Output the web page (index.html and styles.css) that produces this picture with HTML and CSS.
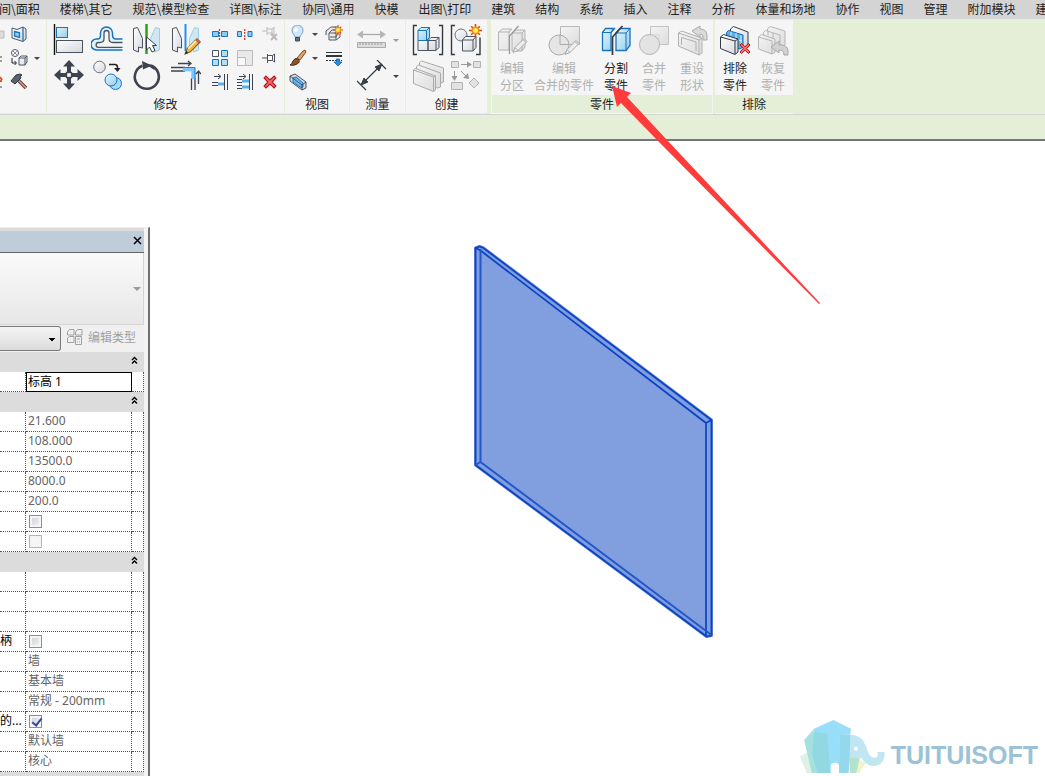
FILE: index.html
```
<!DOCTYPE html>
<html lang="zh-CN">
<head>
<meta charset="utf-8">
<title>零件</title>
<link rel="stylesheet" href="styles.css">
</head>
<body>
<svg class="defs" aria-hidden="true">
  <defs>
    <linearGradient id="blue" x1="0" y1="0" x2="1" y2="1"><stop offset="0" stop-color="#e6f5fc"/><stop offset="1" stop-color="#92cdec"/></linearGradient>
    <linearGradient id="gray" x1="0" y1="0" x2="1" y2="1"><stop offset="0" stop-color="#ffffff"/><stop offset="1" stop-color="#d3d7dd"/></linearGradient>
    <linearGradient id="dim" x1="0" y1="0" x2="1" y2="1"><stop offset="0" stop-color="#f4f4f4"/><stop offset="1" stop-color="#dddddd"/></linearGradient>
    <symbol id="pencil" viewBox="0 0 16 16"><path d="M1 15l2-5L12 1l3 3-9 9z" fill="#f5b63c" stroke="#8a5a18"/><path d="M4 10L12.500 1.500" stroke="#fff0b0" stroke-width="1.500"/><path d="M11 2l3 3 1.500-1.500-3-3z" fill="#d66b5b" stroke="#8a3b2c" stroke-width=".6"/><path d="M1 15l1-3 2 2z" fill="#222"/></symbol>
    <symbol id="pencil-dim" viewBox="0 0 16 16"><path d="M1 15l2-5L12 1l3 3-9 9z" fill="#eee" stroke="#aaa"/><path d="M3 10l3 3M11 2l3 3" stroke="#aaa"/></symbol>
    <symbol id="cross" viewBox="0 0 12 12"><path d="M2.500 1L6 4.200 9.500 1 11 2.500 7.800 6 11 9.500 9.500 11 6 7.800 2.500 11 1 9.500 4.200 6 1 2.500z" fill="#f4696b" stroke="#b3161d"/></symbol>
    <symbol id="spark" viewBox="0 0 12 12"><path d="M6 0v12M0 6h12M2 2l8 8M10 2l-8 8" stroke="#d9420f" stroke-width="1.400"/><circle cx="6" cy="6" r="3" fill="#fff04a" stroke="#ef8a1c" stroke-width="1.300"/></symbol>
  </defs>
</svg>
<div class="app">
  <nav class="tabs">
    <button>间\面积</button><button>楼梯\其它</button><button>规范\模型检查</button><button>详图\标注</button><button>协同\通用</button><button>快模</button><button>出图\打印</button><button>建筑</button><button>结构</button><button>系统</button><button>插入</button><button>注释</button><button>分析</button><button>体量和场地</button><button>协作</button><button>视图</button><button>管理</button><button>附加模块</button><button>建</button>
  </nav>

  <header class="ribbon">
    <section class="panel panel-edge">
      <div class="edge-tools">
        <button aria-label="剪切"><svg width="6" height="18"><path d="M0 6h4v7H0" fill="#ddd" stroke="#bbb"/></svg></button>
        <button aria-label="几何图形"><svg width="18" height="18"><path d="M2 3l5 1.500L13 2l3 2v10l-3 2.500L2 13z" fill="url(#gray)" stroke="#505762"/><path d="M13 2v14M4.500 6.500l5 1.300v4.500l-5-1.300z" fill="#8ecdf2" stroke="#1b75bb" stroke-width="1.300"/></svg></button>
        <span></span>
        <button aria-label="连接"><svg width="6" height="18"><path d="M0 8h2M0 12h2" stroke="#444"/></svg></button>
        <button aria-label="连接几何图形"><svg width="18" height="18"><circle cx="5" cy="4" r="3.500" fill="#fff" stroke="#505762"/><path d="M2.500 1.500l5 5M7.500 1.500l-5 5" stroke="#8a929c"/><path d="M2 9v5h4M4.500 12l2 2-2 2" fill="none" stroke="#222"/><path d="M9 9l2-2h6v6l-2 3H9zM9 9h6l2-2M15 9v7" fill="url(#gray)" stroke="#505762"/></svg></button>
        <button class="drop" aria-label="更多"></button>
        <button aria-label="拆分面"><svg width="6" height="18"><path d="M0 4l2 3M0 8h2" stroke="#d45b20" stroke-width="2"/><path d="M0 14h2" stroke="#444"/></svg></button>
        <button aria-label="拆除"><svg width="18" height="18"><path d="M8 7l8 8" stroke="#6d3d37" stroke-width="3.500"/><path d="M8 7l8 8" stroke="#d4a099" stroke-width="1.500"/><path d="M1 8L6 2l4-1 2 1-2 1 1 2-6 6z" fill="#59636e" stroke="#30363e"/></svg></button>
        <span></span>
      </div>
    </section>

    <section class="panel">
      <div class="panel-body modify">
        <div class="large-grid">
          <button aria-label="对齐"><svg width="32" height="32"><path d="M2.500 0v31" stroke="#111" stroke-width="1.400"/><rect x="4.500" y="3.500" width="11" height="10" fill="url(#blue)" stroke="#1873bd"/><rect x="4.500" y="16.500" width="26" height="12" fill="url(#gray)" stroke="#4c535e"/></svg></button>
          <button aria-label="偏移"><svg width="32" height="32" fill="none"><path d="M31.500 15H25q-3.500 0-3.500-4V9a6 6 0 0 0-12 0v2q0 4-3 4h-1a5.500 5.500 0 0 0 0 11h26" fill="#e3f3fb" stroke="#1873bd" stroke-width="1.500"/><path d="M31.500 18.500H22q-4 0-4-4V9a2.500 2.500 0 0 0-5 0v5.500q0 4-4 4H7.500a2.400 2.400 0 0 0 0 4.800h24" fill="#f5f5f5" stroke="#4c535e" stroke-width="1.300"/></svg></button>
          <button aria-label="镜像 - 拾取轴"><svg width="32" height="32"><path d="M3.500 4.500l4-1 5 11v9.500l-4-1v5l-5-2z" fill="url(#gray)" stroke="#4c535e"/><path d="M29.500 4.500l-4-1-5 11v9.500l4-1v5l5-2z" fill="#cfe8f4" stroke="#9bcde7"/><path d="M16.500 0v30" stroke="#2fa214" stroke-width="2.500"/><path d="M16.500 13v13l3-3 2.500 5 3-1.500-2.500-5h4z" fill="#fff" stroke="#39404a"/></svg></button>
          <button aria-label="镜像 - 绘制轴"><svg width="32" height="32"><path d="M3.500 4.500l4-1 5 11v9.500l-4-1v5l-5-2z" fill="url(#gray)" stroke="#4c535e"/><path d="M29.500 4.500l-4-1-5 11v9.500l4-1v5l5-2z" fill="#cfe8f4" stroke="#9bcde7"/><path d="M16.500 0v27" stroke="#2390ea" stroke-width="2"/><use href="#pencil" x="15" y="14" width="17" height="17"/></svg></button>
          <button aria-label="移动"><svg width="32" height="32"><path d="M17 0l6 6.500h-4V12h-4V6.500h-4zM17 30l6-6.500h-4V18h-4v5.500h-4zM2 15l6.500-6v4H14v4H8.500v4zM32 15l-6.500-6v4H20v4h5.500v4z" fill="#3d444f"/><rect x="14.500" y="12.500" width="5" height="5" fill="#fff" stroke="#3d444f" stroke-width="1.400"/></svg></button>
          <button aria-label="复制"><svg width="32" height="32"><circle cx="8.500" cy="7" r="5.800" fill="url(#gray)" stroke="#6b727b"/><path d="M18 4.500h6q2.500 0 2.500 3v2" fill="none" stroke="#222" stroke-width="1.500"/><path d="M23 8h6.500l-3 4z" fill="#222"/><circle cx="24.500" cy="23.500" r="6" fill="#a8daf2" stroke="#1873bd"/><circle cx="20" cy="20" r="6" fill="url(#blue)" stroke="#1873bd"/></svg></button>
          <button aria-label="旋转"><svg width="32" height="32"><path d="M20 5.200a12 12 0 1 1-8.500.8" fill="none" stroke="#3d444f" stroke-width="2.600" transform="rotate(4 16.500 17)"/><path d="M12 1l10 4.500-9 4z" fill="#3d444f"/><path d="M19 5l6 4" stroke="#3d444f" stroke-width="2.500"/></svg></button>
          <button aria-label="修剪/延伸为角"><svg width="32" height="32" fill="none"><path d="M2 7.500h14M2 11h14M22.500 18v12M26 18v12" stroke="#3d444f" stroke-width="1.300"/><path d="M14 9.300h10.300V19" stroke="#7fc4fb" stroke-width="4"/><path d="M14 7.500h12V19" stroke="#1c7fd7"/><path d="M9 3.500h13M19 1l3 2.500-3 2.500M29.500 24V11M27 14l2.500-3 2.500 3" stroke="#3d444f" stroke-width="1.300"/></svg></button>
        </div>
        <div class="small-grid">
          <button aria-label="拆分图元"><svg width="18" height="18"><path d="M1.500 6.500h6v5h-6zM10.500 6.500h6v5h-6z" fill="#8fcdf0" stroke="#1873bd"/><path d="M8.500 4v11" stroke="#d43a30" stroke-width="1.300" stroke-dasharray="2 1"/></svg></button>
          <button aria-label="用间隙拆分"><svg width="18" height="18"><path d="M1.500 6.500h4v5h-4zM12 6.500h4v5h-4z" fill="#8fcdf0" stroke="#1873bd"/><path d="M8.700 4v11" stroke="#d43a30" stroke-width="1.300" stroke-dasharray="2 1"/></svg></button>
          <button aria-label="解锁"><svg width="18" height="18" fill="none" stroke="#bbb"><path d="M1 6h5M6 2v8M6 4h5v4H6M11 4l2-2v8l-2-2"/><path d="M10 9l6 6M16 9l-6 6" stroke-width="2"/></svg></button>
          <button aria-label="阵列"><svg width="18" height="18" fill="#b4ddf4" stroke="#1873bd"><path d="M10.500 1.500h6v6h-6zM1.500 10.500h6v6h-6zM10.500 10.500h6v6h-6z"/><path d="M1.500 1.500h6v6h-6z" fill="#fff" stroke="#4c535e"/></svg></button>
          <button aria-label="缩放"><svg width="18" height="18" fill="#e9e9e9" stroke="#bbb"><path d="M1.500 1.500h15v15h-15z"/><path d="M1.500 8.500h8v8h-8z" fill="#f8f8f8"/></svg></button>
          <button aria-label="锁定"><svg width="18" height="18" fill="#fff" stroke="#4c535e"><path d="M1 9h5M6.500 5v9M6.500 6.500h5v5h-5M11.500 6.500l2-1.500v8l-2-1.500"/></svg></button>
          <button aria-label="修剪/延伸单个图元"><svg width="18" height="18" fill="none" stroke="#3d444f"><path d="M1 9.500h6M1 12.500h6M3 3.500h6M7 1l3 2.500L7 6M13.500 1v16M16.500 1v16"/><path d="M7 11h6" stroke="#58aff3" stroke-width="3"/></svg></button>
          <button aria-label="修剪/延伸多个图元"><svg width="18" height="18" fill="none" stroke="#3d444f"><path d="M1 6.500h5M1 9.500h5M1 12.500h5M1 15.500h5M3 3.500h6M7 1l3 2.500L7 6M13.500 1v16M16.500 1v16"/><path d="M6 8h7M6 14h7" stroke="#58aff3" stroke-width="3"/></svg></button>
          <button aria-label="删除"><svg width="18" height="18"><use href="#cross" x="2" y="2" width="14" height="14"/></svg></button>
        </div>
      </div>
      <h2>修改</h2>
    </section>

    <section class="panel">
      <div class="panel-body view-tools">
        <button aria-label="隐藏"><svg width="18" height="18"><path d="M6 12c0-2-3-3-3-6.500a5.500 5.500 0 0 1 11 0C14 9 11 10 11 12z" fill="#cfe8fb" stroke="#6f9fc9"/><circle cx="7" cy="5" r="2" fill="#fff"/><path d="M6.500 12.500h4v3.500h-4z" fill="#69717d" stroke="#3f4650"/></svg></button>
        <button class="drop" aria-label="隐藏选项"></button>
        <button aria-label="置换图元"><svg width="18" height="18"><path d="M1 10V6l5-4h7v6l-2 4H5M4 8h7v7H4zM4 8l3-3h7M11 15l4-3V5" fill="#e8eaec" stroke="#555c66"/><use href="#spark" x="8" y="0" width="10" height="10"/></svg></button>
        <button aria-label="替换"><svg width="18" height="18"><path d="M8 9l6-7 2-1 1 2-6 8z" fill="#e9a15b" stroke="#7a4a2b"/><path d="M1 16q2-1 3-4 2-4 5-2 3 3-1 5-3 2-7 1z" fill="#8f5527" stroke="#4d2b14"/></svg></button>
        <button class="drop" aria-label="替换选项"></button>
        <button aria-label="线处理"><svg width="18" height="18"><path d="M1 3.500h16" stroke="#30363e"/><path d="M1 7h16" stroke="#30363e" stroke-width="2"/><path d="M1 11.500h16" stroke="#30363e" stroke-dasharray="2 1"/><path d="M11.500 10h3v3h2.500l-4 4-4-4h2.500z" fill="#2192e9" stroke="#12589b" stroke-width=".7"/></svg></button>
        <button aria-label="选择框"><svg width="18" height="18"><path d="M1 3l5-2 11 8v6l-4 2L1 8z" fill="#d6dce1" stroke="#49515c"/><path d="M4 5l3-1 7 6v4l-2 .5L4 9z" fill="#6cb9ee" stroke="#1873bd"/><path d="M1 3l12 9v5M13 12l4-3" fill="none" stroke="#49515c"/></svg></button>
      </div>
      <h2>视图</h2>
    </section>

    <section class="panel">
      <div class="panel-body measure">
        <button aria-label="测量"><svg width="32" height="32"><path d="M3 10.500h24" stroke="#aaa" stroke-width="1.300"/><path d="M1 10.500l6-4v8zM30 10.500l-6-4v8z" fill="#b5b5b5"/><path d="M1.500 18.500h28v5h-28z" fill="#ddd" stroke="#aaa"/><path d="M4 19v2M7 19v2M10 19v2M13 19v2M16 19v2M19 19v2M22 19v2M25 19v2" stroke="#999"/></svg></button>
        <button class="drop dim" aria-label="测量选项"></button>
        <button aria-label="对齐尺寸标注"><svg width="32" height="32"><path d="M5 25L26 4M1 21l9 9M21 0l9 9" stroke="#39404a" stroke-width="1.300"/><path d="M5 25l3-7 4 4zM26 4l-3 7-4-4z" fill="#39404a" stroke="#39404a"/></svg></button>
        <button class="drop" aria-label="标注选项"></button>
      </div>
      <h2>测量</h2>
    </section>

    <section class="panel">
      <div class="panel-body create">
        <button aria-label="创建组"><svg width="32" height="32"><path d="M5 1.500H1.500v29H5M27 1.500h3.500v29H27" fill="none" stroke="#343b45" stroke-width="1.400"/><path d="M6 16.500h10v10H6zM16 16.500l3-3h8v10l-3 3h-8z" fill="url(#gray)" stroke="#4c535e"/><path d="M16 16.500h8v10M24 16.500l3-3" fill="none" stroke="#4c535e"/><path d="M6 6.500l3-3h8.500v10l-3 3H6z" fill="url(#blue)" stroke="#1873bd"/><path d="M6 6.500h8.500v10M14.500 6.500l3-3" fill="none" stroke="#1873bd"/></svg></button>
        <button aria-label="创建类似"><svg width="32" height="32"><path d="M5 1.500H1.500v29H5M26 30.500h4v-17" fill="none" stroke="#343b45" stroke-width="1.400"/><circle cx="11" cy="11" r="6" fill="url(#gray)" stroke="#6b727b"/><path d="M12.500 16l3-3.500H26v11l-3 3.500H12.500z" fill="url(#gray)" stroke="#4c535e"/><path d="M12.500 16H23v10.500M23 16l3-3.500" fill="none" stroke="#4c535e"/><use href="#spark" x="19" y="0" width="13" height="13"/></svg></button>
        <button aria-label="创建部件"><svg width="32" height="32" fill="url(#dim)" stroke="#aaa"><path d="M7.500 2.500l2-1.500 22 7v14l-3 1L8 16z"/><path d="M4.500 6.500l2-1.500 22 8v14l-3 1L5 20z"/><path d="M1.500 10l2-1.500L23.500 16v14l-2 1.500L1.500 23.500zM21.500 17v14M1.500 10l20 7 2-1"/></svg></button>
        <button aria-label="创建关系"><svg width="32" height="32"><path d="M1.500 1.500h7v6h-7zM23.500 1.500h7v6h-7zM1.500 22.500h11v7h-11zM24 18l5 5-5 5-5-5z" fill="#e2e2e2" stroke="#b2b2b2"/><path d="M11 4.500h9M4.500 11v8M11 11l7 7" stroke="#999"/><path d="M17 1.500l5 3-5 3zM1.500 16h6l-3 5zM19 19l-1-6-5 5z" fill="#999"/></svg></button>
      </div>
      <h2>创建</h2>
    </section>

    <section class="panel contextual first">
      <div class="panel-body parts">
        <button class="part" disabled><svg width="32" height="32"><path d="M2.500 8l4-3h9L13 8v18H2.500zM16 9l4-3h9v17l-3 4H16z" fill="url(#dim)" stroke="#b2b2b2"/><path d="M2.500 8H13l3-3M16 9h10l3-3M26 9v17" fill="none" stroke="#b2b2b2"/><path d="M13.500 30V12l9-10" fill="none" stroke="#999" stroke-width="1.300"/><use href="#pencil-dim" x="16" y="13" width="16" height="17"/></svg><span>编辑<br>分区</span></button>
        <button class="part wide" disabled><svg width="32" height="32"><path d="M12.500 2.500h19v18h-19z" fill="url(#dim)" stroke="#b8b8b8"/><circle cx="11" cy="21" r="10" fill="#e5e5e5" stroke="#aaa"/><path d="M12 11v9.500h9" fill="none" stroke="#aaa"/><use href="#pencil-dim" x="16" y="15" width="16" height="17"/></svg><span>编辑<br>合并的零件</span></button>
        <button class="part"><svg width="32" height="32"><path d="M2.500 8.500l3-4H14l-3 4v18H2.500z" fill="url(#blue)" stroke="#1873bd" stroke-width="1.300"/><path d="M2.500 8.500H11l4-4" fill="none" stroke="#1873bd"/><path d="M16 9l4-4.500h10v17l-4 5H16z" fill="url(#blue)" stroke="#1873bd" stroke-width="1.300"/><path d="M16 9h10l4-4.500M26 9v17" fill="none" stroke="#1873bd"/><path d="M12.500 31V13l10-11" fill="none" stroke="#343b45" stroke-width="1.700"/></svg><span>分割<br>零件</span></button>
        <button class="part" disabled><svg width="32" height="32"><path d="M12.500 2.500h18v18h-18z" fill="url(#dim)" stroke="#c2c2c2"/><circle cx="11.500" cy="20.500" r="10" fill="#e3e3e3" stroke="#b2b2b2"/><path d="M13 11h8v9" fill="none" stroke="#d6d6d6"/></svg><span>合并<br>零件</span></button>
        <button class="part" disabled><svg width="32" height="32"><path d="M2.500 9l3-2L26 14v15l-3 2L2.500 22z" fill="url(#dim)" stroke="#b0b0b0"/><path d="M2.500 9L23 16v15M23 16l3-2M5.500 21v-7.500L20 18v9" fill="none" stroke="#b0b0b0"/><path d="M16 7l8-5v3q7 0 7 7v4h-4v-3q0-3-3-3v3z" fill="#d9d9d9" stroke="#aaa"/></svg><span>重设<br>形状</span></button>
      </div>
      <h2>零件</h2>
    </section>

    <section class="panel contextual">
      <div class="panel-body parts">
        <button class="part"><svg width="32" height="32"><path d="M11.500 5l3-2.500L29 8v14l-3 2-14-6z" fill="url(#gray)" stroke="#343b45"/><path d="M7.500 8.500l2-2L24 11v12l-3 2L8 20z" fill="#59b0ea" stroke="#1368b4"/><path d="M12 7.500v4M17 9v5M22 11v10M8 12l15 5" stroke="#d6effc"/><path d="M1.500 13l3-2.500L19 15v13l-3 2.500-14.500-6zM1.500 13L16 17v13M16 17l3-2" fill="url(#gray)" stroke="#343b45"/><use href="#cross" x="20" y="18" width="12" height="13"/></svg><span>排除<br>零件</span></button>
        <button class="part" disabled><svg width="32" height="32" fill="url(#dim)" stroke="#b5b5b5"><path d="M10.500 5l3-2.500L28 7v14l-3 2-14-6z"/><path d="M6.500 8.500l2-2L23 11v12l-3 2L7 20zM11 7.500v4M16 9v5"/><path d="M1.500 13l3-2.500L18 15v13l-3 2-13.500-5zM1.500 13L15 17v13"/><path d="M14 23l8-6v4h3q6 1 6 6v4h-4q0-5-5-5v3z" fill="#d2d2d2" stroke="#aaa"/></svg><span>恢复<br>零件</span></button>
      </div>
      <h2>排除</h2>
    </section>
  </header>
  <div class="options-bar"></div>

  <main class="workspace">
    <aside class="palette">
      <div class="palette-title"><button aria-label="关闭"><svg width="10" height="10"><path d="M1 1l7 7M8 1L1 8" stroke="#000" stroke-width="1.500"/></svg></button></div>
      <div class="type-preview"><button class="drop dim" aria-label="类型选择器"></button></div>
      <div class="type-row">
        <select aria-label="类型过滤"><option></option></select>
        <button class="edit-type" disabled><svg width="18" height="18" fill="#f0f0f0" stroke="#a0a0a0"><path d="M1.500 4l2-2.500H8V7H1.500zM9.500 4l2-2.500H16V7H9.500zM1.500 10l2-1.500H8v6H1.500z"/><path d="M9.500 8.500h6v8h-6zM11 11h3M11 14h1M13 14h1"/></svg><span>编辑类型</span></button>
      </div>
      <table class="properties">
        <colgroup><col class="col-name"><col class="col-value"><col class="col-link"></colgroup>
        <tbody>
          <tr class="group"><th colspan="3"><button aria-label="折叠"><svg width="7" height="8"><path d="M1 4l2.500-2.500L6 4M1 7.500L3.500 5 6 7.500" fill="none" stroke="#000" stroke-width="1.400"/></svg></button></th></tr>
          <tr><th></th><td class="editing"><input type="text" value="标高 1" aria-label="标高"></td><td></td></tr>
          <tr class="group"><th colspan="3"><button aria-label="折叠"><svg width="7" height="8"><path d="M1 4l2.500-2.500L6 4M1 7.500L3.500 5 6 7.500" fill="none" stroke="#000" stroke-width="1.400"/></svg></button></th></tr>
          <tr><th></th><td>21.600</td><td></td></tr>
          <tr><th></th><td>108.000</td><td></td></tr>
          <tr><th></th><td>13500.0</td><td></td></tr>
          <tr><th></th><td>8000.0</td><td></td></tr>
          <tr><th></th><td>200.0</td><td></td></tr>
          <tr><th></th><td><input type="checkbox" aria-label="选项一"></td><td></td></tr>
          <tr><th></th><td><input type="checkbox" aria-label="选项二" disabled></td><td></td></tr>
          <tr class="group"><th colspan="3"><button aria-label="折叠"><svg width="7" height="8"><path d="M1 4l2.500-2.500L6 4M1 7.500L3.500 5 6 7.500" fill="none" stroke="#000" stroke-width="1.400"/></svg></button></th></tr>
          <tr><th></th><td></td><td></td></tr>
          <tr><th></th><td></td><td></td></tr>
          <tr><th></th><td></td><td></td></tr>
          <tr><th><label for="grip">柄</label></th><td><input type="checkbox" id="grip"></td><td></td></tr>
          <tr><th></th><td>墙</td><td></td></tr>
          <tr><th></th><td>基本墙</td><td></td></tr>
          <tr><th></th><td>常规 - 200mm</td><td></td></tr>
          <tr><th><label for="source">的...</label></th><td><input type="checkbox" id="source" checked></td><td></td></tr>
          <tr><th></th><td>默认墙</td><td></td></tr>
          <tr><th></th><td>核心</td><td></td></tr>
        </tbody>
      </table>
    </aside>

    <svg class="wall" width="240" height="394" viewBox="474 245 240 394">
      <path d="M475.500 248l4-1.500 4 1.500L711.500 420v215.500l-5 1L475.500 465z" fill="#819fdf" stroke="#6d91dd" stroke-width="3" stroke-linejoin="round"/>
      <g fill="none" stroke="#0b42c3" stroke-width="1.700">
        <path d="M475.500 248l4-1.500 4 1.500L711.500 420v215.500l-5 1L475.500 465z"/>
        <path d="M475.500 248l5 2.500L706 423v213.500M706 423l5.500-3"/>
        <path d="M480.500 249v213L711.500 635M475.500 465l5-3" stroke="#2457c9" stroke-width="2"/>
      </g>
    </svg>

    <div class="watermark">
      <svg width="90" height="57" viewBox="24 30 270 171">
        <path d="M30 152l38-22 12 71H50z" fill="#dff1e5"/>
        <path d="M43 102l29-34h40l9 133H66z" fill="#a5e1de"/>
        <path d="M72 68l58-26 53 26-18 133h-18v-22q0-9-12-9t-13 9v22H84z" fill="#98def8"/>
        <path d="M72 78l40 6 9 117H84L66 150z" fill="#91d8e3"/>
        <path d="M43 102l29-25-8 60 18 64H66z" fill="#a5e1de"/>
        <path d="M205 160l23 10-20 31h-28z" fill="#eff4ce"/>
        <path d="M180 150h31l-12 51h-20z" fill="#b5e2cf"/>
        <path d="M149 84q55-2 70 19 9 15 14 33 6 21 24 19 10-3 5-17h22q1 38-31 42-24 1-39-25l-33 1-5 45h-29z" fill="#c0e7f1"/>
        <path d="M149 84l32 4-2 66-4 47h-28z" fill="#94d8ed"/>
        <circle cx="198" cy="128" r="6" fill="#fff"/>
      </svg>
      <span>TUITUISOFT</span>
    </div>
  </main>

  <svg class="pointer" width="210" height="220" viewBox="612 86 210 220" aria-hidden="true"><path d="M612 86l19 7-4 4 40 43 153 163-1 1L660 143l-39-40-4 4z" fill="#ff3b3b"/></svg>
</div>
</body>
</html>
```
FILE: styles.css
```
* { box-sizing: border-box; }
body {
  margin: 0;
  overflow: hidden;
  background: #fff;
  color: #222;
  font: 12px/16px "Noto Sans CJK SC", sans-serif;
}
button {
  margin: 0;
  padding: 0;
  border: 0;
  background: none;
  color: inherit;
  font: inherit;
}
svg { display: block; flex: none; }
.defs { position: absolute; width: 0; height: 0; }
.app {
  position: relative;
  display: flex;
  flex-direction: column;
  min-height: 100vh;
}

/* Tab strip */
.tabs {
  display: flex;
  gap: 20px;
  height: 19px;
  margin-left: -1px;
  overflow: hidden;
  background: #d4d4d4;
  white-space: nowrap;
}
.tabs button { flex: none; height: 18px; line-height: 18px; }

/* Ribbon */
.ribbon {
  display: flex;
  height: 96px;
  padding: 1px 0;
  border-bottom: 1px solid #d4d4d4;
  background: #e5efd7;
}
.panel {
  display: flex;
  flex: none;
  flex-direction: column;
  height: 93px;
  margin-right: 1px;
  background: #f5f5f5;
}
.panel-body { flex: none; height: 75px; padding-top: 2px; }
.panel h2 {
  height: 18px;
  margin: 0;
  font-size: 12px;
  font-weight: 400;
  line-height: 18px;
  text-align: center;
}
.panel-edge { width: 46px; }
.edge-tools {
  display: grid;
  grid-template-columns: 10px 24px 6px;
  grid-auto-rows: 24px;
  align-items: center;
  padding-top: 2px;
}
.modify { display: flex; gap: 3px; width: 237px; padding-left: 2px; }
.large-grid {
  display: grid;
  grid-template-columns: repeat(4, 39px);
  grid-auto-rows: 36px;
}
.large-grid button, .create button { padding: 0 4px 0 3px; }
.small-grid {
  display: grid;
  grid-template-columns: repeat(3, 25px);
  grid-auto-rows: 24px;
}
.small-grid button { padding: 0 3px; }
.view-tools {
  display: grid;
  grid-template-columns: 26px 8px 30px;
  grid-auto-rows: 24px;
  width: 64px;
}
.view-tools button { display: grid; place-items: center; }
.measure {
  display: grid;
  grid-template-columns: 38px 10px;
  grid-auto-rows: 36px;
  width: 55px;
  padding-left: 3px;
}
.measure button { display: grid; place-items: center; }
.create {
  display: grid;
  grid-template-columns: repeat(2, 38px);
  grid-auto-rows: 36px;
  width: 81px;
  padding-left: 3px;
}
.drop { display: grid; place-items: center; }
.drop::before {
  content: "";
  border: 3px solid transparent;
  border-top-color: #444;
  border-bottom: 0;
}
.drop.dim::before { border-top-color: #999; }

.contextual { height: 94px; padding: 0 1px; margin-right: 2px; }
.contextual.first { margin-left: 3px; padding: 0 2px; }
.contextual h2 { margin: 0 -1px; background: #e5efd7; }
.parts { display: flex; padding-top: 4px; }
.part {
  display: flex;
  flex-direction: column;
  align-items: center;
  gap: 3px;
  width: 38px;
  line-height: 17px;
  white-space: nowrap;
}
.part.wide { width: 66px; }
.part:disabled { color: #b0b0b0; }

.options-bar {
  height: 26px;
  border-bottom: 2px solid #76767a;
  background: #e5efd7;
}

/* Drawing area */
.workspace {
  position: relative;
  display: flex;
  flex: 1;
}
.wall { position: absolute; left: 474px; top: 104px; }
.watermark {
  position: absolute;
  right: 7px;
  bottom: 3px;
  display: flex;
  align-items: flex-end;
  gap: 3px;
  color: #9bc2d6;
  font: bold 25px/36px "Liberation Sans", sans-serif;
}
.pointer { position: absolute; left: 612px; top: 86px; pointer-events: none; }

/* Properties palette */
.palette {
  width: 150px;
  margin-top: 86px;
  padding: 3px 4px 0 0;
  border-top: 1px solid #eee;
  border-right: 2px solid #707070;
  background: linear-gradient(90deg, #dcdcdc 144px, #f4f4f4 144px);
}
.palette-title {
  display: flex;
  align-items: center;
  justify-content: flex-end;
  height: 22px;
  padding: 0 1px 2px 0;
  border-bottom: 1px solid #666;
  background: #bfcddb;
}
.type-preview {
  display: flex;
  align-items: center;
  justify-content: flex-end;
  height: 72px;
  padding-right: 2px;
  border-right: 1px solid #d4d4d4;
  border-bottom: 1px solid #d4d4d4;
  background: linear-gradient(#fafafa, #e7e7e7);
}
.type-preview .drop::before { border-width: 4px 4px 0; }
.type-row {
  display: flex;
  align-items: flex-start;
  gap: 5px;
  height: 27px;
  padding-top: 1px;
  background: #f0f0f0;
}
.type-row select {
  width: 61px;
  height: 25px;
  border: 1px solid #777;
  border-left: 0;
  border-radius: 0 3px 3px 0;
  appearance: none;
  background:
    linear-gradient(45deg, transparent 50%, #000 50%) 48px 11px / 4px 4px no-repeat,
    linear-gradient(-45deg, transparent 50%, #000 50%) 52px 11px / 4px 4px no-repeat,
    linear-gradient(#f4f4f4, #dcdcdc);
}
.edit-type {
  display: flex;
  align-items: center;
  gap: 4px;
  height: 22px;
  color: #a0a0a0;
  white-space: nowrap;
}
.properties {
  width: 144px;
  border-collapse: separate;
  border-spacing: 0;
  table-layout: fixed;
  background: #fff;
  font: 12px/16px "Noto Sans", "Noto Sans CJK SC", sans-serif;
}
.col-name { width: 26px; }
.col-value { width: 106px; }
.col-link { width: 12px; }
.properties tr { height: 20px; }
.properties th, .properties td {
  height: 20px;
  padding: 0 2px 2px;
  border-right: 1px dotted #555;
  border-bottom: 1px dotted #555;
  color: #646464;
  font-weight: 400;
  line-height: 16px;
  text-align: left;
  white-space: nowrap;
}
.properties th { padding: 0 0 2px; color: #000; }
.properties label { display: block; }
.properties .group th {
  padding: 0 6px 4px 0;
  border: 0;
  background: #dcdcdc;
}
.group button { display: block; margin-left: auto; }
.properties .editing { padding: 0; border-right: 0; border-bottom: 0; }
.editing input {
  display: block;
  width: 100%;
  height: 20px;
  padding: 0 2px 2px 1px;
  border: 1px solid #000;
  background: #fff;
  color: #000;
  font: inherit;
}
.properties input[type="checkbox"] {
  display: block;
  width: 13px;
  height: 13px;
  margin: 3px 1px 1px;
  border: 1px solid #8e8f8f;
  appearance: none;
  background: linear-gradient(135deg, #cbcfd5, #f6f6f6);
  box-shadow: inset 0 0 0 2px #f4f4f4;
}
.properties input:disabled { border-color: #b5b5b5; background: #f6f6f6; }
.properties input:checked::before {
  content: "";
  display: block;
  width: 4px;
  height: 8px;
  margin: 0 0 0 4px;
  border: solid #34499a;
  border-width: 0 2px 2px 0;
  transform: rotate(38deg);
}
```
